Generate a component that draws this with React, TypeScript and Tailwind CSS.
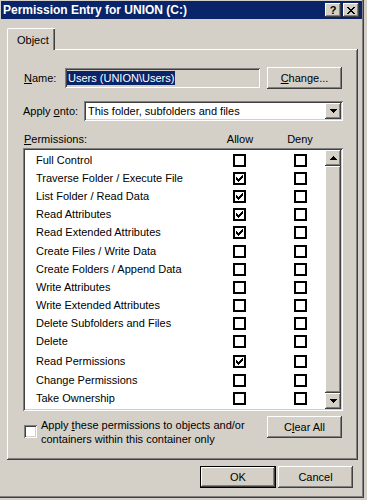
import React from "react";

const raised =
  "shadow-[inset_-1px_-1px_#404040,inset_1px_1px_#ffffff,inset_-2px_-2px_#808080,inset_2px_2px_#d4d0c8]";
const sunken =
  "shadow-[inset_1px_1px_#808080,inset_-1px_-1px_#ffffff,inset_2px_2px_#404040,inset_-2px_-2px_#d4d0c8]";

type Perm = { label: string; allow: boolean; gap?: string };

const perms: Perm[] = [
  { label: "Full Control", allow: false },
  { label: "Traverse Folder / Execute File", allow: true },
  { label: "List Folder / Read Data", allow: true },
  { label: "Read Attributes", allow: true },
  { label: "Read Extended Attributes", allow: true },
  { label: "Create Files / Write Data", allow: false, gap: "mt-[1px]" },
  { label: "Create Folders / Append Data", allow: false },
  { label: "Write Attributes", allow: false },
  { label: "Write Extended Attributes", allow: false },
  { label: "Delete Subfolders and Files", allow: false },
  { label: "Delete", allow: false },
  { label: "Read Permissions", allow: true, gap: "mt-[2px]" },
  { label: "Change Permissions", allow: false, gap: "mt-[1px]" },
  { label: "Take Ownership", allow: false },
];

function Check() {
  return (
    <svg width="7" height="7" viewBox="0 0 7 7" shapeRendering="crispEdges">
      <path
        fill="#000"
        d="M6 0h1v1h-1zM5 1h2v1h-2zM0 2h1v1h-1zM4 2h3v1h-3zM0 3h2v1h-2zM3 3h3v1h-3zM0 4h5v1h-5zM1 5h3v1h-3zM2 6h1v1h-1z"
      />
    </svg>
  );
}

function FlatBox({ checked }: { checked: boolean }) {
  return (
    <div className="flex h-[13px] w-[13px] shrink-0 items-center justify-center border-2 border-black bg-white">
      {checked && <Check />}
    </div>
  );
}

function Arrow({ up }: { up?: boolean }) {
  return (
    <svg width="7" height="4" viewBox="0 0 7 4" shapeRendering="crispEdges">
      <path
        fill="#000"
        d={
          up
            ? "M3 0h1v1h-1zM2 1h3v1h-3zM1 2h5v1h-5zM0 3h7v1h-7z"
            : "M0 0h7v1h-7zM1 1h5v1h-5zM2 2h3v1h-3zM3 3h1v1h-1z"
        }
      />
    </svg>
  );
}

function Button({
  children,
  className = "",
}: {
  children: React.ReactNode;
  className?: string;
}) {
  return (
    <div
      className={
        "flex h-[22px] w-[75px] items-center justify-center bg-[#d4d0c8] " +
        raised +
        " " +
        className
      }
    >
      {children}
    </div>
  );
}

export default function App() {
  return (
    <div
      className="h-[500px] w-[367px] overflow-hidden bg-[#d4d0c8] text-[11px] leading-[14px] text-black"
      style={{ fontFamily: '"Liberation Sans", Arial, sans-serif' }}
    >
      <div className="h-[498px] w-[364px] pt-[1px] shadow-[inset_-1px_-1px_#404040,inset_-2px_-2px_#808080]">
        {/* title bar */}
        <div className="ml-[1px] flex h-[18px] w-[361px] items-center justify-between bg-[#0a246a] pl-[2px] pr-[3px]">
          <span className="text-[12px] font-bold text-white">
            Permission Entry for UNION (C:)
          </span>
          <div className="flex gap-[2px]">
            <div
              className={
                "flex h-[14px] w-[16px] items-center justify-center bg-[#d4d0c8] text-[11px] font-bold leading-none " +
                raised
              }
            >
              ?
            </div>
            <div
              className={
                "flex h-[14px] w-[16px] items-center justify-center bg-[#d4d0c8] " +
                raised
              }
            >
              <svg width="8" height="7" viewBox="0 0 8 7" shapeRendering="crispEdges">
                <path
                  fill="#000"
                  d="M0 0h2v1h-2zM6 0h2v1h-2zM1 1h2v1h-2zM5 1h2v1h-2zM2 2h4v1h-4zM3 3h2v1h-2zM2 4h4v1h-4zM1 5h2v1h-2zM5 5h2v1h-2zM0 6h2v1h-2zM6 6h2v1h-2z"
                />
              </svg>
            </div>
          </div>
        </div>

        <div className="ml-[7px] mt-[9px] w-[351px]">
          {/* tab */}
          <div className="relative z-10 flex h-[22px] w-[48px] items-center rounded-tl-[2px] border-l border-t border-white bg-[#d4d0c8] pl-[9px] shadow-[inset_-1px_0_#404040,inset_-2px_0_#808080]">
            Object
          </div>

          {/* panel */}
          <div className={"-mt-[1px] h-[411px] pl-[16px] pr-[15px] pt-[18px] " + raised}>
            <div className="flex h-[22px] items-center">
              <span className="w-[42px] pl-[1px]">
                <span className="underline underline-offset-[1px]">N</span>ame:
              </span>
              <div className={"flex h-[20px] w-[195px] items-center bg-[#d4d0c8] pl-[2px] " + sunken}>
                <span className="bg-[#0a246a] px-[1px] text-white">Users (UNION\Users)</span>
              </div>
              <Button className="ml-[7px]">
                <span>
                  <span className="underline underline-offset-[1px]">C</span>hange...
                </span>
              </Button>
            </div>

            <div className="mt-[12px] flex h-[20px] items-center">
              <span className="w-[61px]">
                Apply <span className="underline underline-offset-[1px]">o</span>nto:
              </span>
              <div className={"flex h-[20px] w-[259px] items-center justify-between bg-white pl-[4px] pr-[2px] " + sunken}>
                <span>This folder, subfolders and files</span>
                <div className={"flex h-[16px] w-[16px] items-center justify-center bg-[#d4d0c8] " + raised}>
                  <Arrow />
                </div>
              </div>
            </div>

            <div className="mt-[11px] flex h-[14px] items-center">
              <span className="w-[187px] pl-[1px]">
                <span className="underline underline-offset-[1px]">P</span>ermissions:
              </span>
              <span className="w-[60px] text-center">Allow</span>
              <span className="w-[60px] text-center">Deny</span>
            </div>

            {/* list */}
            <div className={"mt-[2px] flex h-[263px] bg-white p-[2px] " + sunken}>
              <div className="flex-1 pt-[1px]">
                {perms.map((p) => (
                  <div key={p.label} className={"flex h-[18px] items-center pl-[11px] " + (p.gap ?? "")}>
                    <span className="w-[197px] truncate">{p.label}</span>
                    <FlatBox checked={p.allow} />
                    <div className="ml-[48px]">
                      <FlatBox checked={false} />
                    </div>
                  </div>
                ))}
              </div>
              <div className="flex w-[16px] flex-col">
                <div className={"flex h-[16px] items-center justify-center bg-[#d4d0c8] " + raised}>
                  <Arrow up />
                </div>
                <div className={"flex-1 bg-[#d4d0c8] " + raised} />
                <div className={"flex h-[16px] items-center justify-center bg-[#d4d0c8] " + raised}>
                  <Arrow />
                </div>
              </div>
            </div>

            <div className="mt-[5px] flex items-start justify-between">
              <div className="flex items-start pl-[1px]">
                <div className={"mt-[9px] h-[13px] w-[13px] shrink-0 bg-white " + sunken} />
                <div className="ml-[4px] mt-[2px]">
                  <div>
                    Apply <span className="underline underline-offset-[1px]">t</span>hese permissions to objects and/or
                  </div>
                  <div>containers within this container only</div>
                </div>
              </div>
              <Button className="mr-[1px]">
                <span>
                  C<span className="underline underline-offset-[1px]">l</span>ear All
                </span>
              </Button>
            </div>
          </div>

          {/* dialog buttons */}
          <div className="mt-[6px] flex justify-end gap-[2px] pr-[5px]">
            <div className="h-[22px] w-[76px] border border-black">
              <div className={"flex h-full w-full items-center justify-center bg-[#d4d0c8] " + raised}>
                OK
              </div>
            </div>
            <Button>Cancel</Button>
          </div>
        </div>
      </div>
    </div>
  );
}
